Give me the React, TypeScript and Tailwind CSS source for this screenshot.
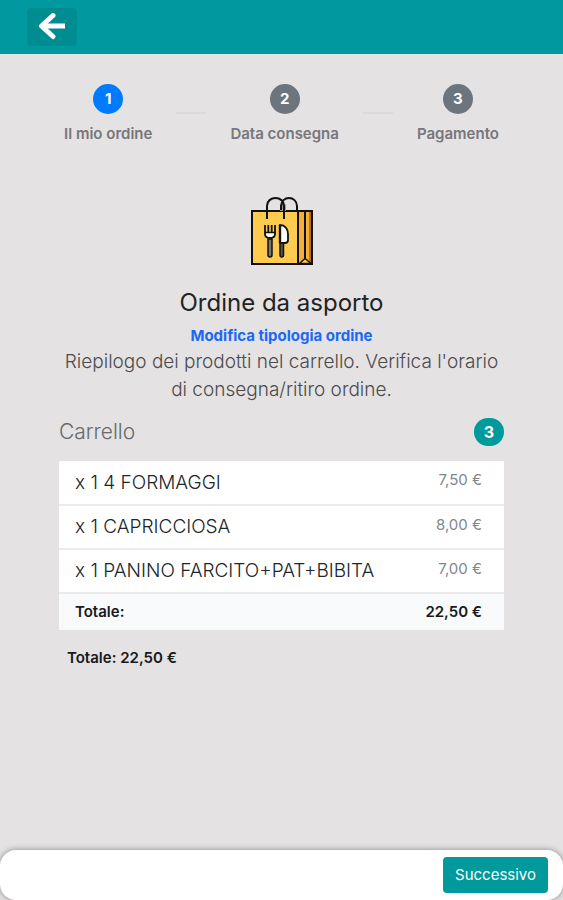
import React from 'react';

interface Step {
    number: number;
    label: string;
}

interface CartItem {
    name: string;
    quantity: number;
    price: string;
}

const STEPS: Step[] = [
    { number: 1, label: 'Il mio ordine' },
    { number: 2, label: 'Data consegna' },
    { number: 3, label: 'Pagamento' }
];

const ITEMS: CartItem[] = [
    { name: '4 FORMAGGI', quantity: 1, price: '7,50 €' },
    { name: 'CAPRICCIOSA', quantity: 1, price: '8,00 €' },
    { name: 'PANINO FARCITO+PAT+BIBITA', quantity: 1, price: '7,00 €' }
];

const TOTAL = '22,50 €';

const BackIcon: React.FC = () => (
    <svg width="28" height="28" viewBox="0 0 28 28" fill="none" stroke="white" aria-hidden="true">
        <path d="M15 2.500 3.500 13 15 23.500" strokeWidth="5" strokeLinecap="round" strokeLinejoin="round" />
        <path d="M4 13H27" strokeWidth="5" />
    </svg>
);

const TakeawayBag: React.FC = () => (
    <svg width="62" height="68" viewBox="0 0 62 68" fill="none" aria-hidden="true">
        <path d="M1 14h46v53H1z" fill="#ffcb4f" />
        <path d="M47 14h14v53H47z" fill="#f5ae38" />
        <path d="M58 14h3v53h-3z" fill="#b9701c" />
        <path d="M1 14h60v53H1zM47 14v53M54 14v48" stroke="#111" strokeWidth="2" />
        <path d="m48.500 66.500 5.500-5 6 5z" fill="#ffcb4f" stroke="#111" strokeWidth="1.500" />
        <path d="M29 14V8l3-3 3 3v6z" fill="#999" />
        <path d="M16 22V9c0-5 4-8 8.500-8S33 4 33 9v13M30 13V9c0-5 4-8 8-8s8 3 8 8v5" stroke="#111" strokeWidth="2" />
        <path d="M14 35h10v3l-2 3h-6l-2-3z" fill="white" />
        <path d="M14 28v9c0 3 2 4 5 4s5-1 5-4v-9M17.300 28v8M20.700 28v8" stroke="#111" strokeWidth="1.800" />
        <path d="M13.500 35.500h11" stroke="#111" strokeWidth="1.500" />
        <path d="M17 42h4v16c0 2.500-4 2.500-4 0z" fill="#777" stroke="#111" strokeWidth="1.500" />
        <path d="M29 28c5 0 8 4 8 9v6c0 2-1 3-3 3h-5z" fill="white" stroke="#111" strokeWidth="1.800" />
        <path d="M29 46h3.500v12c0 2.500-3.500 2.500-3.500 0z" fill="#555" stroke="#111" strokeWidth="1.500" />
        <path d="M29 28v18" stroke="#111" strokeWidth="2.400" />
    </svg>
);

const Stepper: React.FC<{ current: number }> = ({ current }) => (
    <ol className="flex justify-center gap-6">
        {STEPS.map((step) => (
            <React.Fragment key={step.number}>
                {step.number > 1 && (
                    <li aria-hidden="true" className="mt-7 h-0.5 w-[30px] bg-[#dbdadb]" />
                )}
                <li className="flex flex-col items-center gap-2">
                    <span
                        className={`flex size-[30px] items-center justify-center rounded-full text-[15px] font-bold text-white ${
                            step.number === current ? 'bg-[#007bff]' : 'bg-[#6c757d]'
                        }`}
                    >
                        {step.number}
                    </span>
                    <span className="text-[15px] leading-6 font-semibold text-[#77767a]">{step.label}</span>
                </li>
            </React.Fragment>
        ))}
    </ol>
);

const Cart: React.FC = () => (
    <section>
        <div className="flex items-center justify-between">
            <h2 className="text-[21px] leading-7 font-light text-[#66696d]">Carrello</h2>
            <span className="rounded-full bg-[#00999c] px-[10px] text-[16px] leading-7 font-bold text-white">
                {ITEMS.length}
            </span>
        </div>
        <table className="mt-[15px] w-full bg-white text-left">
            <tbody>
                {ITEMS.map((item) => (
                    <tr key={item.name} className="h-11 border-b-2 border-[#ebebec]">
                        <td className="pt-px pl-4 text-[19px] font-light text-[#212529]">
                            x {item.quantity} {item.name}
                        </td>
                        <td className="pr-[22px] pb-1 text-right text-[15px] text-[#81878c]">{item.price}</td>
                    </tr>
                ))}
            </tbody>
            <tfoot>
                <tr className="h-[37px] bg-[#f8fafb] text-[15px] text-[#18191b]">
                    <th scope="row" className="pt-px pl-4 font-semibold">Totale:</th>
                    <td className="pt-px pr-[22px] text-right font-semibold">{TOTAL}</td>
                </tr>
            </tfoot>
        </table>
        <p className="mt-4 px-2 text-[15px] leading-6 font-semibold text-[#18191b]">Totale: {TOTAL}</p>
    </section>
);

export default function App() {
    return (
        <div className="flex min-h-screen flex-col bg-[#e4e2e3] font-[Inter,sans-serif]">
            <header className="flex h-[54px] items-center bg-[#00999f] px-[27px]">
                <button
                    type="button"
                    aria-label="Indietro"
                    className="flex h-[38px] w-[50px] items-center justify-center rounded-sm bg-[#008d91]"
                >
                    <BackIcon />
                </button>
            </header>

            <main className="grow px-[59px] pt-[30px] pb-8">
                <Stepper current={1} />

                <div className="mt-[51px] flex flex-col items-center text-center">
                    <TakeawayBag />
                    <h1 className="mt-5 text-[24px] leading-9 text-[#222]">Ordine da asporto</h1>
                    <a href="#tipologia" className="mt-[3px] text-[15px] leading-6 font-bold text-[#1a69f5]">
                        Modifica tipologia ordine
                    </a>
                    <p className="text-[19px] leading-7 font-light text-[#4b4b4d]">
                        Riepilogo dei prodotti nel carrello. Verifica l'orario di consegna/ritiro ordine.
                    </p>
                </div>

                <div className="mt-[14px]">
                    <Cart />
                </div>
            </main>

            <footer className="flex h-[50px] items-center justify-end rounded-2xl bg-white px-[15px] shadow-[0_0_6px_rgba(0,0,0,0.4)]">
                <button
                    type="button"
                    className="h-9 rounded-sm bg-[#00999c] px-3 text-[15px] text-white"
                >
                    Successivo
                </button>
            </footer>
        </div>
    );
}
